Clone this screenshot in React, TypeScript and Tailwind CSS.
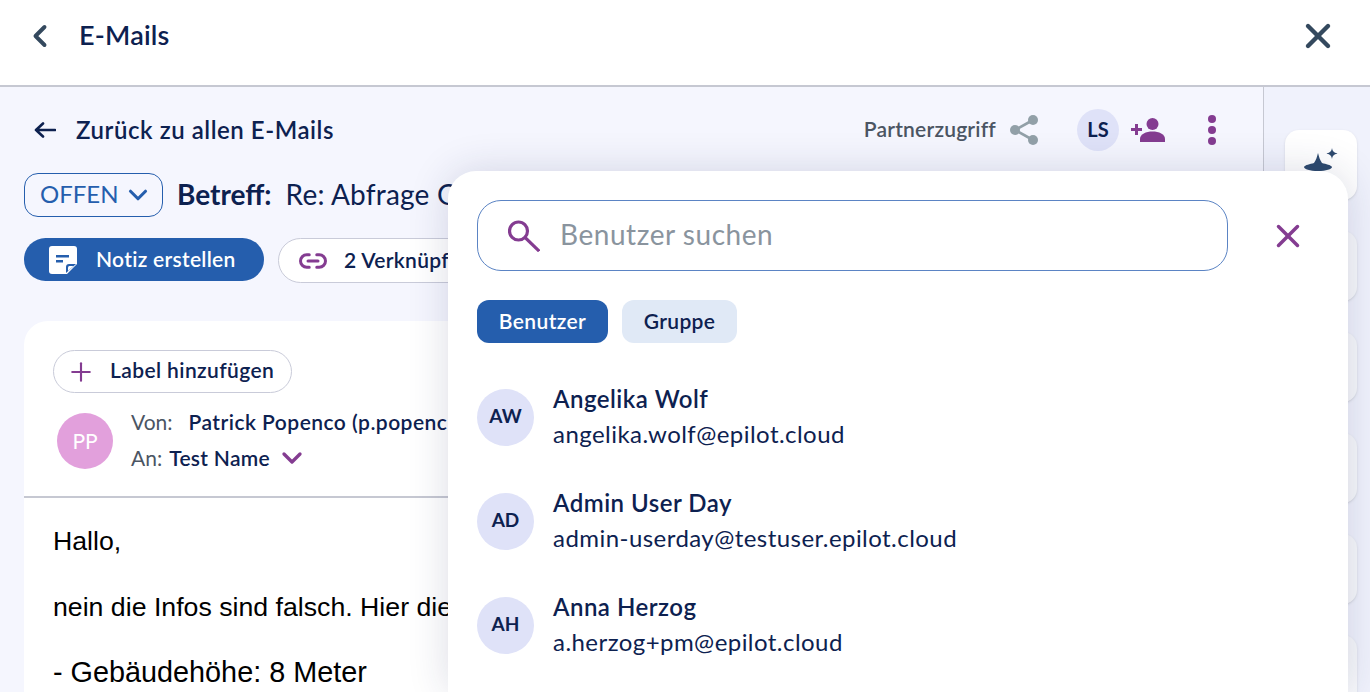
import React from "react"
import { ChevronDown, ChevronLeft, Link2, Plus, X } from "lucide-react"

const users = [
  { initials: "AW", name: "Angelika Wolf", email: "angelika.wolf@epilot.cloud" },
  { initials: "AD", name: "Admin User Day", email: "admin-userday@testuser.epilot.cloud" },
  { initials: "AH", name: "Anna Herzog", email: "a.herzog+pm@epilot.cloud" },
]

function NoteIcon() {
  return (
    <svg width="28" height="28" viewBox="0 0 28 28">
      <path d="M3 0h22a3 3 0 0 1 3 3v15l-10 10H3a3 3 0 0 1-3-3V3a3 3 0 0 1 3-3z" fill="#fff" />
      <path d="M7 9h13v2.500H7zM7 14h7v2.500H7z" fill="#255ead" />
      <path d="M17 27v-6a3 3 0 0 1 3-3h7z" fill="#255ead" />
      <path d="M19 25v-3.500a1.500 1.500 0 0 1 1.500-1.500h4z" fill="#fff" />
    </svg>
  )
}

function BackArrow() {
  return (
    <svg width="22" height="16" viewBox="0 0 22 16" fill="none" stroke="#0d2150" strokeWidth="2.6" strokeLinecap="round" strokeLinejoin="round">
      <path d="M21 8H2M9 1.500 2 8l7 6.500" />
    </svg>
  )
}

function ShareIcon() {
  return (
    <svg width="30" height="32" viewBox="0 0 30 32" fill="#92a0a8">
      <circle cx="24" cy="6" r="5" />
      <circle cx="24" cy="26" r="5" />
      <circle cx="6" cy="16" r="5" />
      <path d="M6 16 24 6M6 16l18 10" stroke="#92a0a8" strokeWidth="2.6" fill="none" />
    </svg>
  )
}

function AddPersonIcon() {
  return (
    <svg width="34" height="24" viewBox="0 0 34 24" fill="#843c91">
      <circle cx="21.500" cy="6" r="6" />
      <path d="M9 24v-3c0-5 6-7.500 12.500-7.500S34 16 34 21v3z" />
      <path d="M0 10h4V6h3v4h4v3H7v4H4v-4H0z" />
    </svg>
  )
}

function HatIcon() {
  return (
    <svg width="34" height="28" viewBox="0 0 34 28" fill="#2d4a6e">
      <path d="M14 5c1 4 2 7 4 10 4 1 9 2 10 4 0 2-6 4-14 4S0 21 0 19c1-2 6-3 10-4 2-3 3-6 4-10z" />
      <path d="M28 0c.5 3 1.500 4.500 5.500 5.500-4 1-5 2.500-5.500 5.500-.5-3-1.500-4.500-5.500-5.500 4-1 5-2.500 5.500-5.500z" />
    </svg>
  )
}

function SearchIcon() {
  return (
    <svg width="32" height="32" viewBox="0 0 32 32" fill="none" stroke="#843c91" strokeWidth="3.200" strokeLinecap="square">
      <circle cx="10.500" cy="11" r="9" />
      <path d="M17.500 18 30 30" />
    </svg>
  )
}

function UserRow({ initials, name, email }: { initials: string; name: string; email: string }) {
  return (
    <div className="flex items-center gap-[19px] h-[57px]">
      <div className="w-[57px] h-[57px] rounded-full bg-[#dfe2f8] flex items-center justify-center pb-[2px] text-[19px] font-bold text-[#0d2150] shrink-0">
        {initials}
      </div>
      <div className="-mt-[3px]">
        <div className="text-[24px] leading-[32px] font-semibold tracking-[0.5px] text-[#0d2150]">{name}</div>
        <div className="text-[24px] leading-[32px] mt-[3px] tracking-[0.45px] text-[#0d2150]">{email}</div>
      </div>
    </div>
  )
}

export default function App() {
  return (
    <div className="relative h-[692px] w-[1370px] overflow-hidden bg-[#f0f2fc] font-['Lato',sans-serif] text-[#0d2150]">
      <header className="h-[87px] bg-white border-b-2 border-[#c6c8d2] flex items-center justify-between pl-[22px] pr-[32px] pb-[14px]">
        <div className="flex items-center gap-[21px]">
          <ChevronLeft size={36} strokeWidth={2.6} className="text-[#34495e]" />
          <h1 className="text-[27px] font-semibold tracking-[0.2px]">E-Mails</h1>
        </div>
        <X size={40} strokeWidth={2.6} className="text-[#34495e]" />
      </header>

      <div className="flex h-[605px]">
        <main className="w-[1264px] shrink-0 border-r border-[#c6c8d2] bg-[#f5f6fe] pl-[24px] overflow-hidden">
          <div className="flex items-center justify-between h-[86px] pr-[47px]">
            <div className="flex items-center gap-[20px] pl-[10px]">
              <BackArrow />
              <span className="text-[24px] font-semibold tracking-[0.55px]">Zurück zu allen E-Mails</span>
            </div>
            <div className="flex items-center">
              <span className="text-[21px] font-semibold tracking-[0.2px] text-[#4b5563] pb-[3px]">Partnerzugriff</span>
              <span className="ml-[13px]"><ShareIcon /></span>
              <div className="ml-[38px] w-[42px] h-[42px] rounded-full bg-[#dfe2f8] flex items-center justify-center pb-[2px] text-[20px] font-bold">LS</div>
              <span className="ml-[12px]"><AddPersonIcon /></span>
              <div className="ml-[43px] flex flex-col gap-[3px]">
                <span className="w-[8px] h-[8px] rounded-full bg-[#843c91]" />
                <span className="w-[8px] h-[8px] rounded-full bg-[#843c91]" />
                <span className="w-[8px] h-[8px] rounded-full bg-[#843c91]" />
              </div>
            </div>
          </div>

          <div className="flex items-center h-[44px]">
            <div className="w-[139px] h-[44px] rounded-[14px] border border-[#255ead] flex items-center pl-[15px] gap-[4px] text-[#255ead] text-[24px] shrink-0">
              <span className="pb-[3px]">OFFEN</span>
              <ChevronDown size={30} strokeWidth={2.500} />
            </div>
            <span className="ml-[14px] text-[28px] font-bold pb-[3px]">Betreff:</span>
            <span className="ml-[14px] text-[28px] tracking-[0.2px] whitespace-nowrap pb-[3px]">Re: Abfrage G</span>
          </div>

          <div className="flex items-start gap-[14px] mt-[21px]">
            <button className="w-[240px] h-[43px] rounded-full bg-[#255ead] text-white flex items-center pl-[25px] gap-[19px] text-[21px] font-semibold tracking-[0.3px] shrink-0">
              <NoteIcon />
              <span className="pb-[2px]">Notiz erstellen</span>
            </button>
            <button className="w-[300px] h-[45px] rounded-full bg-white border border-[#c9cbd9] flex items-center pl-[19px] gap-[16px] text-[21px] font-semibold tracking-[0.3px] shrink-0 whitespace-nowrap">
              <Link2 size={30} strokeWidth={2.4} className="text-[#843c91]" />
              <span className="pb-[2px]">2 Verknüpf</span>
            </button>
          </div>

          <section className="mt-[38px] mr-[24px] h-[400px] bg-white rounded-t-[24px]">
            <div className="h-[177px] px-[29px] pt-[29px] border-b-2 border-[#c6c8d2]">
              <button className="w-[239px] h-[43px] rounded-full border border-[#c9cbd9] flex items-center pl-[12px] gap-[14px] text-[21px] font-semibold tracking-[0.4px]">
                <Plus size={30} strokeWidth={1.700} className="text-[#843c91]" />
                <span className="pb-[3px]">Label hinzufügen</span>
              </button>
              <div className="flex items-center mt-[11px] ml-[4px]">
                <div className="w-[56px] h-[56px] mt-[2px] rounded-full bg-[#e2a0dc] text-white text-[21px] flex items-center justify-center shrink-0">PP</div>
                <div className="ml-[18px] text-[21px]">
                  <div className="flex h-[36px] items-center whitespace-nowrap">
                    <span className="text-[#4b5563]">Von:</span>
                    <span className="ml-[16px] font-semibold tracking-[0.47px]">Patrick Popenco (p.popenc</span>
                  </div>
                  <div className="flex h-[36px] items-center whitespace-nowrap">
                    <span className="text-[#4b5563]">An:</span>
                    <span className="ml-[7px] font-semibold tracking-[0.3px]">Test Name</span>
                    <ChevronDown size={32} strokeWidth={2.500} className="ml-[6px] text-[#843c91]" />
                  </div>
                </div>
              </div>
            </div>
            <div className="pl-[29px] pt-[27px] font-['Liberation_Sans',sans-serif] text-[26.7px] leading-[33px] text-black whitespace-nowrap">
              <p>Hallo,</p>
              <p className="mt-[33px]">nein die Infos sind falsch. Hier die</p>
              <p className="mt-[32px] text-[28.8px]">- Gebäudehöhe: 8 Meter</p>
            </div>
          </section>
        </main>

        <aside className="flex-1 pl-[21px] pt-[43px] flex flex-col gap-[31px]">
          <div className="w-[72px] h-[70px] shrink-0 rounded-[14px] bg-white shadow-sm flex justify-center pt-[18px]"><HatIcon /></div>
          <div className="w-[72px] h-[70px] shrink-0 rounded-[14px] bg-[#f7f8fb] shadow-sm" />
          <div className="w-[72px] h-[70px] shrink-0 rounded-[14px] bg-[#f7f8fb] shadow-sm" />
          <div className="w-[72px] h-[70px] shrink-0 rounded-[14px] bg-[#f7f8fb] shadow-sm" />
          <div className="w-[72px] h-[70px] shrink-0 rounded-[14px] bg-[#f7f8fb] shadow-sm" />
          <div className="w-[72px] h-[70px] shrink-0 rounded-[14px] bg-[#f7f8fb] shadow-sm" />
        </aside>
      </div>

      <div className="absolute left-[448px] top-[171px] w-[900px] h-[521px] bg-white rounded-t-[28px] shadow-[0_0_40px_rgba(30,40,90,0.16)] px-[29px] pt-[29px]">
        <div className="flex items-center">
          <div className="w-[751px] h-[71px] rounded-[24px] border border-[#5b84c4] flex items-center pl-[30px] gap-[20px]">
            <SearchIcon />
            <span className="text-[28px] tracking-[0.55px] text-[#8a949e] pb-[3px]">Benutzer suchen</span>
          </div>
          <X size={38} strokeWidth={2.2} className="ml-[41px] text-[#843c91]" />
        </div>
        <div className="flex gap-[14px] mt-[29px]">
          <button className="w-[131px] h-[43px] rounded-[12px] bg-[#255ead] text-white text-[21px] font-semibold tracking-[0.4px] pb-[2px]">Benutzer</button>
          <button className="w-[115px] h-[43px] rounded-[12px] bg-[#e0e9f6] text-[21px] font-semibold tracking-[0.3px] pb-[2px]">Gruppe</button>
        </div>
        <div className="flex flex-col gap-[47px] mt-[46px]">
          {users.map((u) => (
            <UserRow key={u.initials} {...u} />
          ))}
        </div>
      </div>
    </div>
  )
}
